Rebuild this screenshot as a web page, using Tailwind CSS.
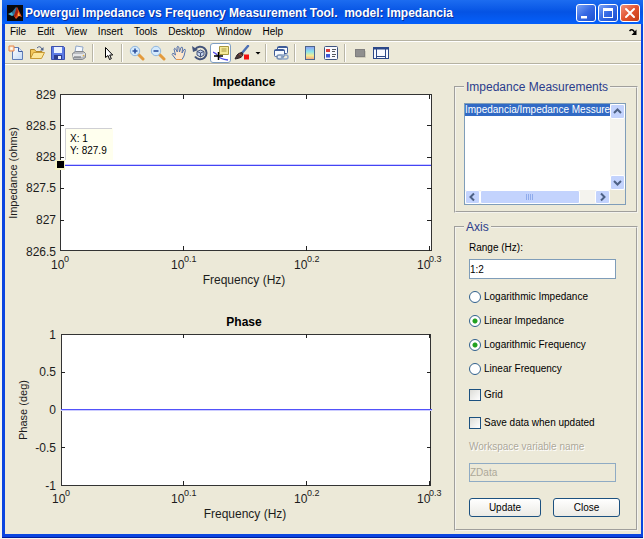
<!DOCTYPE html>
<html lang="en">
<head>
<meta charset="utf-8">
<title>Powergui Impedance vs Frequency Measurement Tool</title>
<script src="https://cdn.jsdelivr.net/npm/@tailwindcss/browser@4"></script>
</head>
<body class="bg-[#f4f4f0] pl-0.5 pr-px font-['Liberation_Sans',Arial,sans-serif] text-[10px] leading-3 text-black">
<div class="bg-[#0a45e0] pl-[3px] pr-0.5 pb-[3px] border-b border-[#001a9c]">

  <header class="-ml-[3px] -mr-0.5 flex h-6 items-center gap-0.5 bg-linear-to-b from-[#1c6cf0] via-[#0553e4] to-[#0560fb] pl-[5px] pr-[3px] pt-0.5">
    <svg class="size-4 shrink-0" viewBox="0 0 16 16" aria-hidden="true"><rect width="16" height="16" fill="#08080c"/><path d="M1 9l4-2 2 3-2 1z" fill="#49b5d8"/><path d="M5 7l4-5 1 1-2 8-2-1z" fill="#2f6f96"/><path d="M7 11L10 2l2 4 3 6-3-1-3 3z" fill="#e4501c"/><path d="M10 2l1 5-2 5-2-1z" fill="#9c1c10"/><path d="M11 7l2 4-2 0z" fill="#ffb648"/></svg>
    <h1 class="flex-1 truncate text-xs font-bold text-white [text-shadow:1px_1px_0_#0a2f9c]">Powergui Impedance vs Frequency Measurement Tool.&nbsp; model: Impedancia</h1>
    <button aria-label="Minimize" class="h-[18px] w-5 rounded-[3px] border border-white bg-linear-to-br from-[#7ba2f5] via-[#3568e4] to-[#1c4fd0]"><svg viewBox="0 0 18 16"><path d="M4 11h6v2.500H4z" fill="#fff"/></svg></button>
    <button aria-label="Maximize" class="h-[18px] w-5 rounded-[3px] border border-white bg-linear-to-br from-[#7ba2f5] via-[#3568e4] to-[#1c4fd0]"><svg viewBox="0 0 18 16"><path d="M4 3h10v10H4zM5 6v6h8V6z" fill="#fff" fill-rule="evenodd"/></svg></button>
    <button aria-label="Close window" class="h-[18px] w-5 rounded-[3px] border border-white bg-linear-to-br from-[#f0907a] via-[#e2532f] to-[#c43c14]"><svg viewBox="0 0 18 16"><path d="M5 4l8 8M13 4l-8 8" stroke="#fff" stroke-width="2" stroke-linecap="round"/></svg></button>
  </header>

  <div class="bg-[#ece9d8]">
    <nav class="flex h-[17px] items-center gap-[11px] border-b border-[#b5b2a2] pl-[5px] pr-1">
      <button>File</button><button>Edit</button><button>View</button><button>Insert</button><button>Tools</button><button>Desktop</button><button>Window</button><button>Help</button>
      <button aria-label="Dock figure" class="ml-auto"><svg class="h-2 w-2" viewBox="0 0 8 8"><path d="M0.500 3Q3 0 5.500 4" fill="none" stroke="#000" stroke-width="1.500"/><path d="M7.500 1.500V7H2.500z" fill="#000"/></svg></button>
    </nav>

    <div role="toolbar" aria-label="Figure tools" class="flex h-[23px] items-center border-t border-b border-t-white border-b-[#b5b2a2] [&>button]:flex [&>button]:h-5 [&>button]:w-[21px] [&>button]:shrink-0 [&>button]:items-center [&>button]:justify-center [&_svg]:size-4 [&>hr]:mx-[3px] [&>hr]:h-[18px] [&>hr]:w-0.5 [&>hr]:shrink-0 [&>hr]:border-0 [&>hr]:border-l [&>hr]:border-[#b9b6a6] [&>hr]:bg-white">
      <button aria-label="New figure"><svg viewBox="0 0 16 16"><defs><linearGradient id="paper" x2="1" y2="1"><stop stop-color="#fff"/><stop offset="1" stop-color="#c2d9f6"/></linearGradient></defs><path d="M4.500 2.500h6l4 4v8h-10z" fill="url(#paper)" stroke="#5f7db8"/><path d="M10.500 2.500v4h4" fill="#dce9fb" stroke="#3f5d9e"/><path d="M1 1h5v5H1z" fill="#fbe3c4" stroke="#e8834a"/><path d="M2.500 2.500h2v2h-2z" fill="#fff"/></svg></button>
      <button aria-label="Open file"><svg viewBox="0 0 16 16"><path d="M1.500 13.500v-9h4l1.500 2h6v2" fill="#f3c75a" stroke="#b08428"/><path d="M1.500 13.500l3-6h11l-3 6z" fill="#fce69a" stroke="#c89a34"/><path d="M8 3q3-3 5 1" fill="none" stroke="#4d6088"/><path d="M14.500 2v3.500H11z" fill="#4d6088"/></svg></button>
      <button aria-label="Save figure"><svg viewBox="0 0 16 16"><path d="M1.500 1.500h12l1 1v12h-13z" fill="#5c7ae4" stroke="#3c50ac"/><path d="M4 2h8v6H4z" fill="#eaf2ff"/><path d="M4 10h8v4.500H4z" fill="#2c3c8c"/><path d="M8 11h3v3H8z" fill="#e8edfa"/></svg></button>
      <button aria-label="Print figure"><svg viewBox="0 0 16 16"><path d="M4 7l1-6 7 1-1 6z" fill="#f6faff" stroke="#8fa6c8"/><path d="M1.500 8.500l3-2h8l2 2v4l-3 2h-9z" fill="#b9bcc0" stroke="#85898e"/><path d="M2 9h9l3-1v2l-3 2H2z" fill="#e4e6e8"/><path d="M3 12h7" stroke="#63676c"/><circle cx="12.500" cy="10.500" r=".8" fill="#eab63a"/></svg></button>
      <hr>
      <button aria-label="Edit plot"><svg viewBox="0 0 16 16"><path d="M5.500 2.500v10l2.500-2 1.500 4 1.800-.8-1.600-3.700h3z" fill="#fff" stroke="#000"/></svg></button>
      <hr>
      <button aria-label="Zoom in"><svg viewBox="0 0 16 16"><path d="M9.500 9.500l4.500 4.500" stroke="#e39a3c" stroke-width="3" stroke-linecap="round"/><circle cx="6" cy="6" r="4.700" fill="#d4eafc" stroke="#8fb6de"/><path d="M3.500 6h5M6 3.500v5" stroke="#2a4f9c" stroke-width="1.600"/></svg></button>
      <button aria-label="Zoom out"><svg viewBox="0 0 16 16"><path d="M9.500 9.500l4.500 4.500" stroke="#e39a3c" stroke-width="3" stroke-linecap="round"/><circle cx="6" cy="6" r="4.700" fill="#d4eafc" stroke="#8fb6de"/><path d="M3.500 6h5" stroke="#2a4f9c" stroke-width="1.600"/></svg></button>
      <button aria-label="Pan"><svg viewBox="0 0 16 16"><path d="M5 14.500L1.200 9.500q0-1.700 1.800-.8l1.500 1.300L3 4q.6-1.500 1.700 0L6.300 7 6 2q.9-1.500 1.800 0L8.500 7 10 2.500q1.400-1 1.600.6L11 8l2-3.500q1.500-.6 1.400.8L13 11l-2 3.500z" fill="#fde6cc" stroke="#5473ac"/><path d="M5 14.500h6" stroke="#e59a52"/></svg></button>
      <button aria-label="Rotate 3D"><svg viewBox="0 0 16 16"><path d="M3 4.500A6.300 6.300 0 1 1 3 11.500" fill="none" stroke="#44547a" stroke-width="2"/><path d="M0 1l1 6 5-2z" fill="#44547a"/><path d="M5 6.500l3.500-1.500L12 6.500v3.500l-3.500 2L5 10z" fill="#c6d5ee" stroke="#44547a"/><path d="M5 6.500l3.500 1.500L12 6.500M8.500 8v4" fill="none" stroke="#44547a"/></svg></button>
      <button aria-label="Data cursor" aria-pressed="true" class="rounded-[3px] border border-[#7f9fc4] bg-white"><svg viewBox="0 0 16 16"><path d="M0 7q3 1 5 4t10 4" fill="none" stroke="#5048e8" stroke-width="1.300"/><path d="M6.500 1.500h9v8h-9z" fill="#f4e99a" stroke="#a89840"/><path d="M8.500 4h5M8.500 6h5" stroke="#a89840"/><path d="M1 11h9M5.500 7v8" stroke="#000" stroke-width="1.500"/></svg></button>
      <button aria-label="Brush data"><svg viewBox="0 0 16 16"><path d="M8 8l6-7" stroke="#4c6fb4" stroke-width="2.400" stroke-linecap="round"/><path d="M9 9q0 4-8 5 1-2 2-4t5-2.500z" fill="#4a3634" stroke="#2c2328"/><path d="M5 9l3 2" stroke="#a84a40"/><path d="M10 9.500h5v5h-5z" fill="#f41010"/></svg></button>
      <button aria-label="Brush options" class="max-w-[10px]"><svg viewBox="0 0 16 16" class="shrink-0"><path d="M6.500 7h5L9 9.500z" fill="#000"/></svg></button>
      <hr>
      <button aria-label="Link plot"><svg viewBox="0 0 16 16"><rect x="4.500" y="1.500" width="10" height="7" rx="1" fill="#f5f9ff" stroke="#3e5c98"/><path d="M4.500 2.500h10" stroke="#3e5c98"/><rect x="1.500" y="4.500" width="10" height="7" rx="1" fill="#f5f9ff" stroke="#3e5c98"/><path d="M1.500 5.500h10" stroke="#3e5c98"/><rect x="4" y="10" width="6" height="4" rx="2" fill="#e4ebf4" stroke="#7790b4" stroke-width="1.500"/><rect x="8.500" y="10" width="6.500" height="4" rx="2" fill="none" stroke="#8fa6c6" stroke-width="1.500"/></svg></button>
      <hr>
      <button aria-label="Insert colorbar"><svg viewBox="0 0 16 16"><defs><linearGradient id="bar" x2="0" y2="1"><stop stop-color="#8c9cf4"/><stop offset=".4" stop-color="#8be4ea"/><stop offset=".7" stop-color="#f4ec90"/><stop offset="1" stop-color="#f4a080"/></linearGradient></defs><rect x="3.500" y="1.500" width="9" height="13" fill="url(#bar)" stroke="#4c648c"/></svg></button>
      <button aria-label="Insert legend"><svg viewBox="0 0 16 16"><rect x="1.500" y="1.500" width="13" height="13" rx="1" fill="#f8faff" stroke="#3e5480"/><path d="M3 4h4v3H3z" fill="#d83c3c"/><path d="M3 9h4v3.500H3z" fill="#3c58d8"/><path d="M9 4.500h4M9 6.500h3M9 9.500h4M9 11.500h3" stroke="#55585e"/></svg></button>
      <hr>
      <button aria-label="Hide plot tools"><svg viewBox="0 0 16 16"><rect x="3.500" y="4.500" width="9" height="7" fill="#8f8f8f" stroke="#7f7f7f"/><path d="M4 12.500h9.500V6" fill="none" stroke="#cfccbc"/></svg></button>
      <button aria-label="Show plot tools"><svg viewBox="0 0 16 16"><rect x=".5" y="2.500" width="15" height="11" fill="#f8faff" stroke="#2c4888"/><path d="M0 3.500h16" stroke="#2c4888" stroke-width="2"/><path d="M3.500 4v9M12.500 4v9M4 11.500h8" stroke="#2c4888"/></svg></button>
    </div>

    <main class="flex items-start border-t border-white pr-[3px]">
      <!-- Both plots share one coordinate system: the window's own. -->
      <div class="min-w-0 flex-1">
        <svg class="block w-full" viewBox="5 65 449 230" role="img" aria-label="Impedance plot" font-size="12" fill="#1c1c1c">
          <rect x="60.500" y="94.500" width="371" height="156" fill="#fff" stroke="#333"/>
          <path d="M60 125.500h4M60 157.500h4M60 188.500h4M60 220.500h4M432 125.500h-5M432 157.500h-5M432 188.500h-5M432 220.500h-5M183.500 95v4M306.500 95v4M429.500 95v4M183.500 251v-5M306.500 251v-5M429.500 251v-5" stroke="#222"/>
          <path d="M61 164.500h370" stroke="#ccccff"/><path d="M61 165.500h370" stroke="#4444f4"/>
          <text x="244" y="86" text-anchor="middle" font-weight="bold" fill="#000">Impedance</text>
          <g text-anchor="end"><text x="56" y="99">829</text><text x="56" y="130">828.5</text><text x="56" y="161">828</text><text x="56" y="192">827.5</text><text x="56" y="224">827</text><text x="56" y="256">826.5</text></g>
          <g><text x="51" y="269">10</text><text x="171" y="269">10</text><text x="294" y="269">10</text><text x="417" y="269">10</text></g>
          <g font-size="9"><text x="64" y="262">0</text><text x="184" y="262">0.1</text><text x="307" y="262">0.2</text><text x="429" y="262">0.3</text></g>
          <text x="244" y="284" text-anchor="middle">Frequency (Hz)</text>
          <text transform="translate(17 173) rotate(-90)" text-anchor="middle" font-size="11">Impedance (ohms)</text>
          <rect x="65" y="128" width="48" height="32" fill="#ffffee"/>
          <path d="M65.500 160v-31.500H112" fill="none" stroke="#cfcfd4"/>
          <g font-size="10" fill="#000"><text x="70" y="142">X: 1</text><text x="70" y="154">Y: 827.9</text></g>
          <rect x="55" y="160" width="10" height="10" fill="#f6f3c4"/><rect x="57" y="161" width="7" height="7" fill="#000"/>
        </svg>
        <svg class="block w-full" viewBox="5 295 449 239" role="img" aria-label="Phase plot" font-size="12" fill="#1c1c1c">
          <rect x="61.500" y="334.500" width="369" height="151" fill="#fff" stroke="#333"/>
          <path d="M61 372.500h4M61 447.500h4M431 372.500h-4M431 447.500h-4M183.500 334v4M306.500 334v4M429.500 334v4M183.500 486v-5M306.500 486v-5M429.500 486v-5" stroke="#222"/>
          <path d="M61 409.500h371" stroke="#5252fa"/><path d="M61 410.500h371" stroke="#ccccff"/>
          <text x="244" y="326" text-anchor="middle" font-weight="bold" fill="#000">Phase</text>
          <g text-anchor="end"><text x="56" y="339">1</text><text x="56" y="376">0.5</text><text x="56" y="414">0</text><text x="56" y="452">-0.5</text><text x="56" y="490">-1</text></g>
          <g><text x="52" y="503">10</text><text x="171" y="503">10</text><text x="294" y="503">10</text><text x="417" y="503">10</text></g>
          <g font-size="9"><text x="65" y="496">0</text><text x="184" y="496">0.1</text><text x="307" y="496">0.2</text><text x="429" y="496">0.3</text></g>
          <text x="245" y="518" text-anchor="middle">Frequency (Hz)</text>
          <text transform="translate(27 410) rotate(-90)" text-anchor="middle" font-size="11">Phase (deg)</text>
        </svg>
      </div>

      <aside class="flex w-[184px] shrink-0 flex-col gap-1.5 pt-3.5">
        <fieldset class="min-w-0 border-2 border-[#f4f3ee] px-2 pb-1.5 [border-style:groove]">
          <legend class="px-0.5 text-xs leading-4 text-[#2b3c8c]"><label for="meas">Impedance Measurements</label></legend>
          <div class="mt-2 mr-0.5 grid h-[102px] grid-cols-[1fr_15px] grid-rows-[1fr_14px] border border-[#7f9db9] bg-white">
            <select id="meas" size="2" class="min-w-0 appearance-none overflow-hidden bg-white [scrollbar-width:none]">
              <option selected class="h-3 overflow-hidden bg-[linear-gradient(#316ac5,#316ac5)] p-0 text-white">Impedancia/Impedance Messurements</option>
            </select>
            <div class="flex flex-col justify-between bg-[#f4f3ee]">
              <button aria-label="Scroll up" class="h-[15px] rounded-[2px] border border-white bg-[#c3d3fd]"><svg viewBox="0 0 13 13"><path d="M3 8l3.500-3.500L10 8" fill="none" stroke="#4d6185" stroke-width="2"/></svg></button>
              <button aria-label="Scroll down" class="h-[15px] rounded-[2px] border border-white bg-[#c3d3fd]"><svg viewBox="0 0 13 13"><path d="M3 5l3.500 3.500L10 5" fill="none" stroke="#4d6185" stroke-width="2"/></svg></button>
            </div>
            <div class="flex bg-[#f4f3ee]">
              <button aria-label="Scroll left" class="w-[15px] rounded-[2px] border border-white bg-[#c3d3fd]"><svg viewBox="0 0 13 12"><path d="M8 2.500L4.500 6 8 9.500" fill="none" stroke="#4d6185" stroke-width="2"/></svg></button>
              <div class="flex w-[100px] items-center justify-center rounded-[2px] border border-white bg-[#c3d3fd]"><svg class="h-1.5 w-2" viewBox="0 0 8 6"><path d="M.5 0v6M2.500 0v6M4.500 0v6M6.500 0v6" stroke="#8fabec"/></svg></div>
              <button aria-label="Scroll right" class="ml-auto w-[15px] rounded-[2px] border border-white bg-[#c3d3fd]"><svg viewBox="0 0 13 12"><path d="M5 2.500L8.500 6 5 9.500" fill="none" stroke="#4d6185" stroke-width="2"/></svg></button>
            </div>
            <div class="bg-[#ece9d8]"></div>
          </div>
        </fieldset>

        <fieldset class="min-w-0 border-2 border-[#f4f3ee] px-2 pb-3 [border-style:groove]">
          <legend class="px-0.5 text-xs leading-4 text-[#2b3c8c]">Axis</legend>
          <div class="flex flex-col pl-[5px] pr-3 pt-1.5">
            <label for="range" class="h-[18px] leading-[14px]">Range (Hz):</label>
            <input id="range" value="1:2" class="h-5 w-full border border-[#7f9db9] bg-white">
            <div class="mt-1.5 [&>label]:flex [&>label]:h-6 [&>label]:items-center [&>label]:gap-[3px] [&_input]:size-3 [&_input]:appearance-none [&_input]:rounded-full [&_input]:border [&_input]:border-[#2f5f8c] [&_input]:bg-white [&_input]:checked:bg-[radial-gradient(circle,#21a121_0_2px,#fff_3px)]">
              <label><input type="radio" name="imp">Logarithmic Impedance</label>
              <label><input type="radio" name="imp" checked>Linear Impedance</label>
              <label><input type="radio" name="freq" checked>Logarithmic Frequency</label>
              <label><input type="radio" name="freq">Linear Frequency</label>
            </div>
            <div class="[&>label]:flex [&>label]:h-7 [&>label]:items-center [&>label]:gap-[3px] [&_input]:size-3 [&_input]:appearance-none [&_input]:border [&_input]:border-[#1c5180] [&_input]:bg-linear-to-br [&_input]:from-[#dcdcd7] [&_input]:to-white">
              <label><input type="checkbox">Grid</label>
              <label><input type="checkbox">Save data when updated</label>
            </div>
            <label for="wsvar" class="h-[26px] leading-5 text-[#aca899] [text-shadow:1px_1px_0_#fff]">Workspace variable name</label>
            <input id="wsvar" value="ZData" disabled class="h-[19px] w-full border border-[#8fabc4] bg-[#ece9d8] text-[#aca899]">
            <div class="mt-4 -mr-1 flex gap-3 [&>button]:h-[19px] [&>button]:rounded-[3px] [&>button]:border [&>button]:border-[#1c5180] [&>button]:bg-linear-to-b [&>button]:from-white [&>button]:to-[#ecebe5]">
              <button class="w-[72px]">Update</button>
              <button class="flex-1">Close</button>
            </div>
          </div>
        </fieldset>
      </aside>
    </main>
  </div>
</div>
</body>
</html>
